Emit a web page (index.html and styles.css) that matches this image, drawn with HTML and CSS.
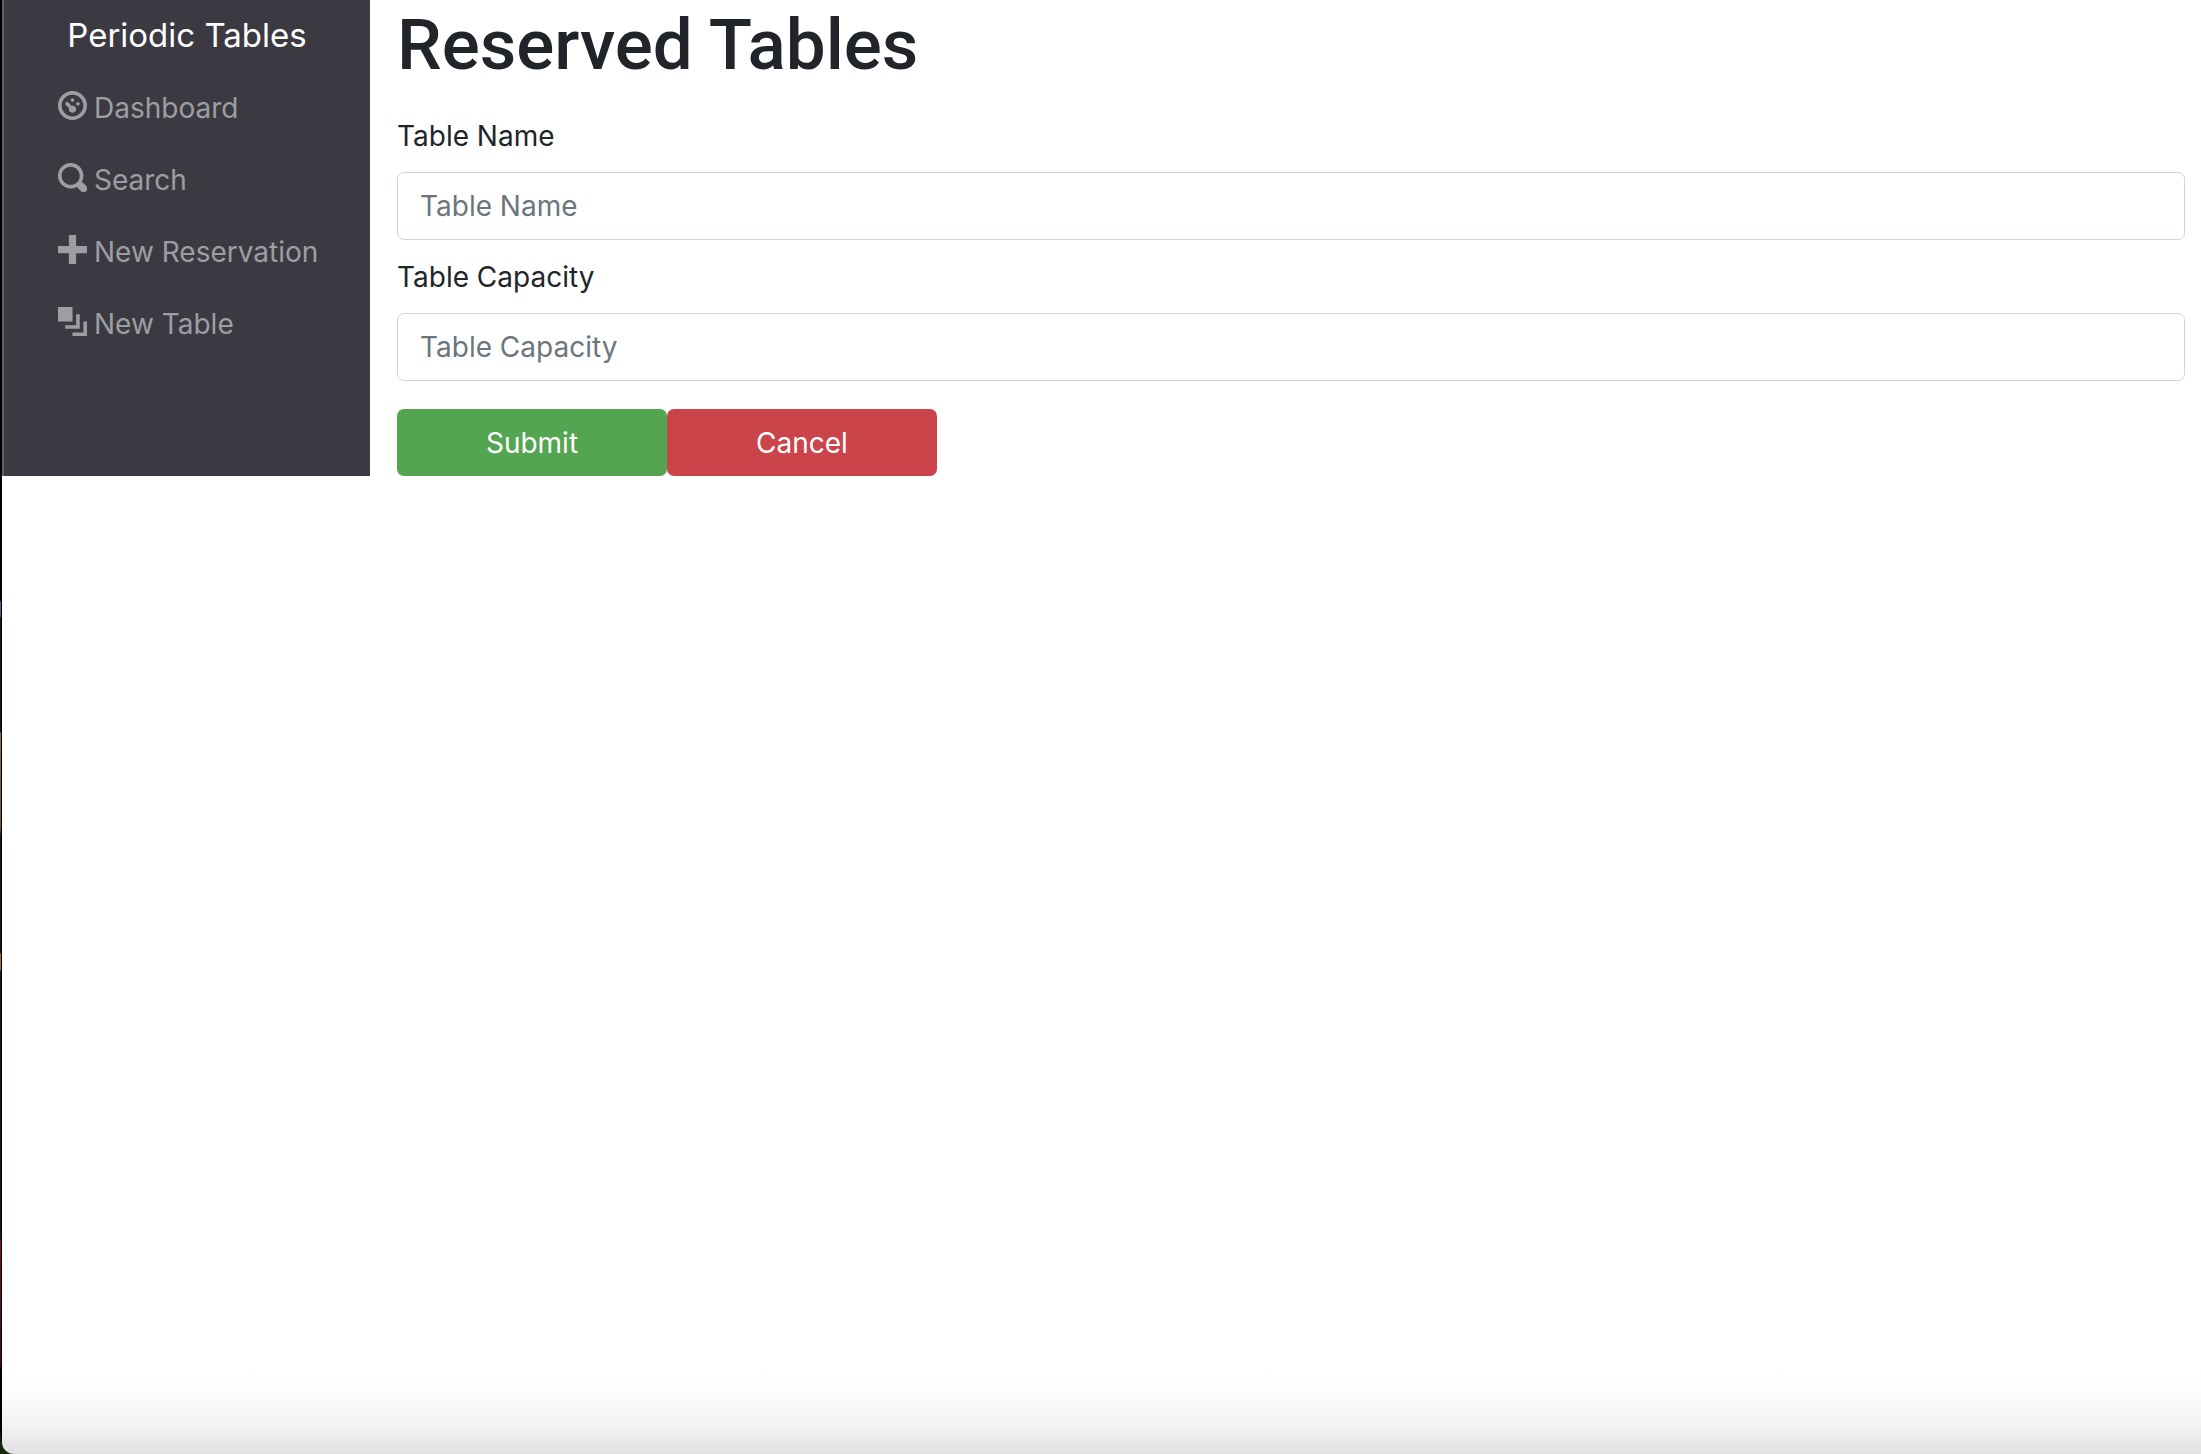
FILE: index.html
```html
<!DOCTYPE html>
<html lang="en">
<head>
  <meta charset="utf-8">
  <title>Periodic Tables</title>
  <link rel="stylesheet" href="styles.css">
</head>
<body>
  <div class="window">
    <div class="layout">
      <nav class="sidebar">
        <a class="brand" href="#">Periodic Tables</a>
        <ul class="menu">
          <li><a class="menu-link" href="#">
            <svg class="icon" viewBox="0 0 8 8" aria-hidden="true"><path d="M4 0c-2.2 0-4 1.8-4 4s1.8 4 4 4 4-1.8 4-4-1.8-4-4-4zm0 1c1.66 0 3 1.34 3 3s-1.34 3-3 3-3-1.34-3-3 1.34-3 3-3zm0 1c-.28 0-.5.22-.5.5s.22.5.5.5.5-.22.5-.5-.22-.5-.5-.5zm-1.66 1a.5.5 0 0 0-.19.84l.91.91c-.02.08-.06.16-.06.25 0 .55.45 1 1 1s1-.45 1-1-.45-1-1-1c-.09 0-.17.04-.25.06l-.91-.91a.5.5 0 0 0-.44-.16.5.5 0 0 0-.06 0zm3.16 0c-.28 0-.5.22-.5.5s.22.5.5.5.5-.22.5-.5-.22-.5-.5-.5z"/></svg>
            <span>Dashboard</span></a></li>
          <li><a class="menu-link" href="#">
            <svg class="icon" viewBox="0 0 8 8" aria-hidden="true"><path d="M3.5 0c-1.93 0-3.5 1.57-3.5 3.5s1.57 3.5 3.5 3.5c.59 0 1.17-.14 1.66-.41a1 1 0 0 0 .13.13l1 1a1.02 1.02 0 1 0 1.44-1.44l-1-1a1 1 0 0 0-.16-.13c.27-.49.44-1.06.44-1.66 0-1.93-1.55-3.5-3.5-3.5zm0 1c1.39 0 2.5 1.11 2.5 2.5 0 .66-.24 1.27-.66 1.72-.01.01-.02.02-.03.03a1 1 0 0 0-.13.13c-.44.4-1.04.63-1.69.63-1.39 0-2.5-1.11-2.5-2.5s1.11-2.5 2.5-2.5z"/></svg>
            <span>Search</span></a></li>
          <li><a class="menu-link" href="#">
            <svg class="icon" viewBox="0 0 8 8" aria-hidden="true"><path d="M3 0v3h-3v2h3v3h2v-3h3v-2h-3v-3h-2z"/></svg>
            <span>New Reservation</span></a></li>
          <li><a class="menu-link" href="#">
            <svg class="icon" viewBox="0 0 8 8" aria-hidden="true"><path d="M0 0v4h4v-4h-4zm5 2v3h-3v1h4v-4h-1zm2 2v3h-3v1h4v-4h-1z"/></svg>
            <span>New Table</span></a></li>
        </ul>
      </nav>
      <main class="content">
        <h1 class="title">Reserved Tables</h1>
        <form class="form">
          <label class="label" for="table-name">Table Name</label>
          <input class="field" id="table-name" type="text" placeholder="Table Name">
          <label class="label" for="capacity">Table Capacity</label>
          <input class="field" id="capacity" type="text" placeholder="Table Capacity">
          <div class="actions">
            <button class="button submit" type="submit">Submit</button>
            <button class="button cancel" type="button">Cancel</button>
          </div>
        </form>
      </main>
    </div>
  </div>
</body>
</html>
```
FILE: styles.css
```css
* {
  box-sizing: border-box;
}

/* The desktop shows as a thin strip left of the window and behind its corner. */
body {
  margin: 0;
  padding-left: 2px;
  font-family: Inter, "Liberation Sans", sans-serif;
  font-size: 28px;
  line-height: 44px;
  color: #212529;
  background-color: #000;
  background-image:
    linear-gradient(#000 600px, #5c5590 602px, #5c5590 616px, #14142c 618px, #14142c 732px, #94695c 733px, #7c5238 828px, #14142c 836px, #14142c 953px, #a96838 954px, #a96838 970px, #14142c 971px, #14142c 1238px, #7c1414 1240px, #4a0a0a 1366px, #000 1368px, #000 1432px, #14280c 1436px),
    linear-gradient(#14280c, #14280c);
  background-position: left top, left bottom;
  background-size: 1px 100%, 12px 12px;
  background-repeat: no-repeat;
}

.window {
  min-height: 100vh;
  background: linear-gradient(to top, #e1e1e1, #f3f3f3 30px, #fcfcfc 56px, #fff 90px);
  border-bottom-left-radius: 12px;
}

.layout {
  display: flex;
}

.sidebar {
  flex: 0 0 368px;
  border-left: 2px solid #62616a;
  background: #3b3a43;
}

.brand {
  display: block;
  padding-top: 7px;
  text-align: center;
  font-size: 33px;
  line-height: 56px;
  color: #fff;
  text-decoration: none;
}

.menu {
  margin: 0;
  padding: 9px 0 0 54px;
  list-style: none;
}

.menu-link {
  display: flex;
  align-items: center;
  gap: 7px;
  height: 72px;
  color: #9d9ea1;
  text-decoration: none;
}

.icon {
  width: 29px;
  height: 29px;
  margin-bottom: 5px;
  fill: currentColor;
}

.content {
  flex: 1;
  min-width: 0;
  padding: 0 16px 0 27px;
}

.title {
  margin: 0 0 21px;
  font-family: Roboto, Inter, sans-serif;
  font-size: 71px;
  line-height: 90px;
  font-weight: 500;
}

.form {
  display: flex;
  flex-direction: column;
}

.label {
  padding: 3px 0 14px;
}

.field {
  height: 68px;
  margin-bottom: 12px;
  padding: 0 22px;
  border: 1px solid #ced4da;
  border-radius: 7px;
  background: #fff;
  font: inherit;
  color: inherit;
}

.field::placeholder {
  color: #6c757d;
  opacity: 1;
}

.actions {
  display: flex;
  padding-top: 16px;
}

.button {
  width: 270px;
  height: 67px;
  border: 0;
  border-radius: 7px;
  font: inherit;
  color: #fff;
}

.submit {
  background: #53a551;
}

.cancel {
  background: #ca444a;
}
```
